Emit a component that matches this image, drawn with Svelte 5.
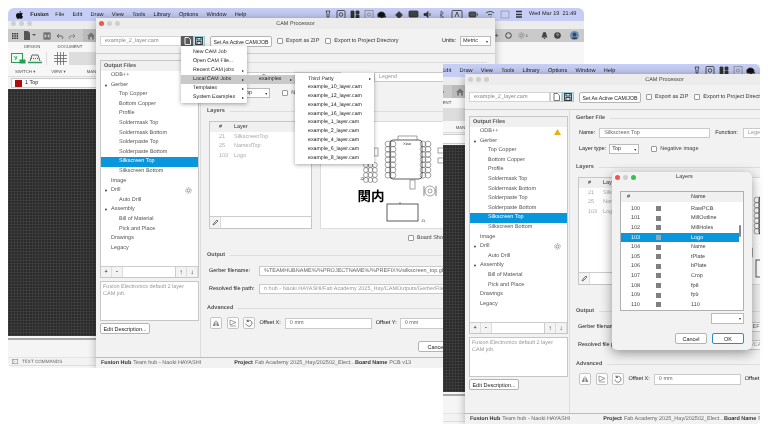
<script>
  const menus = ['File','Edit','Draw','View','Tools','Library','Options','Window','Help'];
  const tree = [
    {t:'ODB++',l:1,warn:true},{t:'Gerber',l:1,arrow:true},{t:'Top Copper',l:2},{t:'Bottom Copper',l:2},{t:'Profile',l:2},
    {t:'Soldermask Top',l:2},{t:'Soldermask Bottom',l:2},{t:'Solderpaste Top',l:2},{t:'Solderpaste Bottom',l:2},
    {t:'Silkscreen Top',l:2,sel:true},{t:'Silkscreen Bottom',l:2},{t:'Image',l:1},{t:'Drill',l:1,arrow:true,gear:true},
    {t:'Auto Drill',l:2},{t:'Assembly',l:1,arrow:true},{t:'Bill of Material',l:2},{t:'Pick and Place',l:2},{t:'Drawings',l:1},{t:'Legacy',l:1}
  ];
  const jobs = ['example_10_layer.cam','example_12_layer.cam','example_14_layer.cam','example_16_layer.cam','example_1_layer.cam','example_2_layer.cam','example_4_layer.cam','example_6_layer.cam','example_8_layer.cam'];
  const first = [['New CAM Job',0],['Open CAM File...',0],['Recent CAM jobs',1],['Local CAM Jobs',1],['Templates',1],['System Examples',1]];
  const layers = [['100','RawPCB'],['101','MillOutline'],['102','MillHoles'],['103','Logo'],['104','Name'],['105','tPlate'],['106','bPlate'],['107','Crop'],['108','fp8'],['109','fp9'],['110','110']];
  const pinRows = [0,1,2,3,4,5,6];
</script>

{#snippet gear(size)}
  <svg width={size} height={size} viewBox="0 0 10 10" fill="none" stroke="#777" stroke-width="1"><circle cx="5" cy="5" r="2"/><circle cx="5" cy="5" r="4" stroke-dasharray="1.4 1.1"/></svg>
{/snippet}

{#snippet pcb()}
  <svg class="pcb" width="167" height="108" viewBox="320 121 167 108" fill="none" stroke="#666" stroke-width="0.6">
    {#each [0,1,2] as r}{#each [0,1,2,3] as c}
      <circle cx={366 + r * 4.4} cy={165 + c * 5} r="2.5"/>
    {/each}{/each}
    <rect x="374" y="148" width="4" height="8" />
    {#each pinRows as r}
      <circle cx="388" cy={144 + r * 5.2} r="2.9"/><circle cx="393" cy={144 + r * 5.2} r="2.9"/>
      <circle cx="423" cy={144 + r * 5.2} r="2.9"/><circle cx="428" cy={144 + r * 5.2} r="2.9"/>
    {/each}
    <rect x="390" y="140" width="32" height="39" rx="3" stroke="#333" stroke-width="0.8"/>
    <path d="M398 140v-4h19v4"/>
    <rect x="410" y="180" width="5" height="9"/>
    <circle cx="430" cy="191" r="5"/><circle cx="430" cy="191" r="2"/>
    <path d="M424 186v10M436 186v10" stroke="#333"/>
    <rect x="387" y="204" width="31" height="17" stroke="#333" stroke-width="0.8"/>
    <path d="M400 204v-2" stroke="#333"/>
    <rect x="438" y="148" width="6" height="5"/><rect x="438" y="158" width="6" height="5"/>
    <text x="407" y="145" class="pt" text-anchor="middle">Xiao</text>
    <text x="421" y="222" class="pt">J1</text>
    <text x="360" y="180" class="pt">J2</text>
    <text x="371" y="201" class="kanji">関内</text>
  </svg>
{/snippet}

{#snippet barIcons()}
  <svg class="baricons" width="260" height="13" viewBox="320 8 260 13" fill="none" stroke="#333" stroke-width="0.8">
    <path d="M326 11h4l-1 3v3h-2v-3z"/>
    <rect x="337" y="10.5" width="8" height="8" rx="1"/><circle cx="341" cy="14.5" r="1.8"/>
    <path d="M351 11h3v7h-3zM356 11h3v3h-3zM356 15h3v3h-3z" fill="#333"/>
    <rect x="365" y="10.5" width="8" height="8" stroke="#888"/><circle cx="369" cy="14.5" r="1.6" stroke="#888"/>
    <path d="M378 16c-1-3 2-4 3-4s4 0 4 3 1 1 1 2h-8zM381 17v2h2v-2" fill="#111"/>
    <circle cx="399" cy="15" r="2.500" fill="#444"/><path d="M399 11v8M395 15h8"/>
    <rect x="409" y="11" width="9" height="6" rx="0.8" fill="#444"/><path d="M412 19h3"/>
    <path d="M424 13.500h2l2-2v6l-2-2h-2z" fill="#333"/><path d="M430 13v3"/>
    <path d="M441 11l2.500 2-3 2 3 2-2.500 2v-8" stroke-width="0.6"/>
    <rect x="452" y="10.500" width="10" height="8" rx="1"/><path d="M455 17l2-5 2 5"/>
    <rect x="469" y="12" width="7" height="5" rx="1" fill="#555"/><path d="M477.500 13.500v2"/>
    <path d="M486 13c3-2 5-2 8 0M488 15c1.500-1 2.500-1 4 0M490 17h0.500" stroke-width="0.9"/>
    <rect x="501" y="11" width="8" height="7" stroke="#999"/>
    <path d="M516 11.500h6M516 14.500h6M516 17h6" stroke-width="1.300"/>
  </svg>
{/snippet}

{#snippet cam(second)}
  <section class="cam">
    <div class="camtitle">
      <i class="dot" class:red={!second}></i><i class="dot"></i><i class="dot"></i>
      <span>CAM Processor</span>
    </div>
    <div class="camtools">
      <div class="jobname">example_2_layer.cam</div>
      <button class="sq" class:dark={!second} aria-label="open">
        <svg width="7" height="8" viewBox="0 0 7 8" fill="none" stroke={second ? '#666' : '#fff'} stroke-width="0.9"><path d="M1 .5h3.500l2 2v5h-5.500z"/></svg>
      </button>
      <button class="sq blue" aria-label="save">
        <svg width="8" height="8" viewBox="0 0 8 8" fill="none" stroke="#333" stroke-width="0.9"><rect x=".5" y=".5" width="7" height="7"/><rect x="2" y=".5" width="4" height="2.500"/><rect x="2" y="4.500" width="4" height="3"/></svg>
      </button>
      <button class="btn setactive">Set As Active CAM/JOB</button>
      <label class="chk zip"><i></i>Export as ZIP</label>
      <label class="chk"><i></i>Export to Project Directory</label>
      <span class="units">Units:</span>
      <div class="select unitsel">Metric<b>▾</b></div>
    </div>
    <div class="cambody">
      <aside class="left">
        <div class="tree">
          <div class="treehead">Output Files</div>
          {#each tree as n}
            <div class="row lv{n.l}" class:sel={n.sel}>
              {#if n.arrow}<em>▼</em>{/if}{n.t}
              {#if n.warn && second}<svg class="warn" width="7" height="6" viewBox="0 0 7 6"><path d="M3.500 0L7 6H0z" fill="#e8b010"/></svg>{/if}
              {#if n.gear}<span class="gear">{@render gear(7)}</span>{/if}
            </div>
          {/each}
          <div class="treetools">
            <span class="tb">+</span><span class="tb">-</span><span class="tbfield"></span><span class="tb bold">↑</span><span class="tb bold">↓</span>
          </div>
        </div>
        <div class="desc">Fusion Electronics default 2 layer CAM job.</div>
        <button class="btn edit">Edit Description...</button>
      </aside>
      <div class="main">
        <div class="head h1">Gerber File</div>
        <div class="form name">
          <span class="lab">Name:</span><div class="field nameinput">Silkscreen Top</div>
          <span class="lab">Function:</span><div class="field fn">Legend</div>
        </div>
        <div class="form type">
          <span class="lab">Layer type:</span><div class="select typesel">Top<b>▾</b></div>
          <label class="chk neg"><i></i>Negative image</label>
        </div>
        <div class="head h2">Layers</div>
        <div class="work">
          <div class="ltable">
            <div class="lhead"><span class="c1">#</span><span>Layer</span></div>
            <div class="lrow"><span class="c1">21</span><span>SilkscreenTop</span></div>
            <div class="lrow"><span class="c1">25</span><span>NamedTop</span></div>
            <div class="lrow"><span class="c1">103</span><span>Logo</span></div>
            <div class="ltools"><span class="tb tall"><svg width="7" height="7" viewBox="0 0 7 7" fill="none" stroke="#666" stroke-width="0.9"><path d="M1 6l1-2 3-3 1 1-3 3z"/></svg></span></div>
          </div>
          <div class="preview">{@render pcb()}</div>
        </div>
        <label class="chk board"><i></i>Board Shown Top</label>
        <div class="head h3">Output</div>
        <div class="form out">
          <span class="lab wide">Gerber filename:</span><div class="field long">%TEAMHUBNAME%/%PROJECTNAME%/%PREFIX%/silkscreen_top.gbr</div>
        </div>
        <div class="form res">
          <span class="lab wide">Resolved file path:</span><div class="field long dim">n hub - Naoki HAYASHI/Fab Academy 2025_Hay/CAMOutputs/GerberFiles/board/silkscreen_top.gbr</div>
        </div>
        <div class="head h4">Advanced</div>
        <div class="form adv">
          <button class="ic" aria-label="mirror"><svg width="8" height="8" viewBox="0 0 8 8" fill="#888"><path d="M3.500 1v6H.5zM4.500 1v6h3z"/></svg></button>
          <button class="ic" aria-label="flip"><svg width="8" height="8" viewBox="0 0 8 8" fill="none" stroke="#888" stroke-width="0.8"><path d="M1 1l6 2.500-6 2.500zM1 7h6"/></svg></button>
          <button class="ic" aria-label="rotate"><svg width="8" height="8" viewBox="0 0 8 8" fill="none" stroke="#555" stroke-width="0.8"><path d="M2 2a3 3 0 1 1-1 2.500M2 .5v2h2"/></svg></button>
          <span class="lab ox">Offset X:</span><div class="field off">0 mm</div>
          <span class="lab oy">Offset Y:</span><div class="field off2">0 mm</div>
        </div>
        <div class="actions"><button class="btn cancel">Cancel</button><button class="btn">Process Job</button></div>
      </div>
    </div>
    <div class="status">
      <b>Fusion Hub</b><span class="s1">Team hub - Naoki HAYASHI</span>
      <b class="p">Project</b><span class="s2">Fab Academy 2025_Hay/202502_Elect...</span>
      <b>Board Name</b><span class="s3">PCB v13</span>
    </div>
  </section>
{/snippet}

{#snippet fusion(second)}
  <div class="menubar">
    <svg class="apple" width="7" height="8" viewBox="0 0 7 8" fill="#111"><path d="M5 0c0 1-.8 1.800-1.600 1.700C3.400 .8 4.200.1 5 0zM3.500 2.200c.5 0 1-.4 1.800-.4.600 0 1.200.3 1.500.8-1.300.8-1.100 2.600.2 3.200C6.500 6.700 5.800 8 5 8c-.6 0-.8-.4-1.500-.4S2.700 8 2.100 8C1 8 0 6 0 4.500 0 3 .9 1.900 2 1.900c.6 0 1.100.3 1.500.3z"/></svg>
    <b>Fusion</b>
    {#each menus as m}<span>{m}</span>{/each}
    {@render barIcons()}
    <span class="clock">Wed Mar 19  21:49</span>
  </div>
  <div class="fustitle"><i class="dot"></i><i class="dot"></i><i class="dot"></i></div>
  <div class="toolbar">
    <svg class="tool t1" width="8" height="8" viewBox="0 0 8 8" fill="#333"><path d="M1 1h1.500v1.500H1zM3.300 1h1.500v1.500H3.300zM5.600 1h1.500v1.500H5.600zM1 3.300h1.500v1.500H1zM3.300 3.300h1.500v1.500H3.300zM5.600 3.300h1.500v1.500H5.600zM1 5.600h1.500v1.500H1zM3.300 5.600h1.500v1.500H3.300zM5.600 5.600h1.500v1.500H5.600z"/></svg>
    <svg class="tool t2" width="12" height="9" viewBox="0 0 12 9" fill="#555"><path d="M0 0h4l2 2v7H0zM8 3h4l-2 2z"/></svg>
    <svg class="tool t3" width="8" height="8" viewBox="0 0 8 8" fill="none" stroke="#555"><rect x="1" y="1" width="6" height="6"/><path d="M3 1v2h2V1M3 7V5h2v2"/></svg>
    <svg class="tool t4" width="8" height="8" viewBox="0 0 8 8" fill="none" stroke="#666"><path d="M1 4h5a2 2 0 0 1 0 3M3 2L1 4l2 2"/></svg>
    <svg class="tool t5" width="8" height="8" viewBox="0 0 8 8" fill="none" stroke="#888"><path d="M7 4H2a2 2 0 0 0 0 3M5 2l2 2-2 2"/></svg>
    <div class="hometab"><svg width="8" height="8" viewBox="0 0 8 8" fill="#777"><path d="M4 .5L8 4H6.800v3.500H5V5H3v2.500H1.200V4H0z"/></svg></div>
    <div class="tright">
      <span class="plus">+</span>
      <svg width="7" height="7" viewBox="0 0 7 7" fill="none" stroke="#444"><circle cx="3.500" cy="3.500" r="2.800"/></svg>
      <span class="gearone">{@render gear(7)}<small>1</small></span>
      <svg class="bell" width="7" height="7" viewBox="0 0 7 7" fill="#444"><path d="M3.500 0C5 0 5.500 1.500 5.500 3L6.500 5.500H.5L1.500 3C1.500 1.500 2 0 3.500 0zM2.800 6h1.400v1H2.800z"/></svg>
      <svg class="help" width="7" height="7" viewBox="0 0 7 7"><circle cx="3.500" cy="3.500" r="3.300" fill="#444"/><path d="M2.500 2.800c0-1.200 2-1.200 2 0 0 .7-1 .7-1 1.500" stroke="#ddd" stroke-width=".7" fill="none"/></svg>
      <svg class="avatar" width="9" height="9" viewBox="0 0 9 9"><circle cx="4.500" cy="4.500" r="4.500" fill="#6d8fb8"/><circle cx="4.500" cy="3.500" r="1.900" fill="#34495f"/><path d="M1.300 8c.6-2.200 5.800-2.200 6.400 0z" fill="#34495f"/></svg>
    </div>
  </div>
  <div class="ribbon">
    <div class="tabs"><span>DESIGN</span><span>DOCUMENT</span></div>
    <div class="rib">
      <svg class="ri1" width="15" height="12" viewBox="0 0 15 12" fill="none" stroke="#2c9b58"><rect x=".5" y=".5" width="11" height="9" fill="#eafaf0"/><path d="M3 3l3 3M6 3l-2 4" stroke-width=".8"/><rect x="9" y="7" width="5" height="3" fill="#2c9b58"/></svg>
      <svg class="ri2" width="14" height="11" viewBox="0 0 14 11" fill="none" stroke="#666"><path d="M2 8l2-6h6l2 6" fill="#eee"/><path d="M3 5.500h8" stroke-dasharray="1 1"/><path d="M0 9.500h14" stroke="#2c9b58" stroke-width="1.500"/></svg>
      <i class="sep"></i>
      <svg class="ri3" width="13" height="13" viewBox="0 0 13 13" fill="none" stroke="#666" stroke-width=".8"><path d="M3.500 0v13M6.500 0v13M9.500 0v13M0 3.500h13M0 6.500h13M0 9.500h13"/></svg>
      <i class="sep s2"></i>
      <svg class="ri4" width="13" height="13" viewBox="0 0 13 13" fill="none" stroke="#666" stroke-width=".8"><rect x=".5" y=".5" width="5" height="10" fill="#ddd"/><rect x="7" y=".5" width="5" height="5" fill="#eee"/><path d="M2 3l3 5 3-5"/><circle cx="10" cy="10" r="2.500" fill="#2a86d8" stroke="none"/></svg>
      <svg class="ri5" width="6" height="13" viewBox="0 0 6 13" fill="#ddd" stroke="#777" stroke-width=".8"><rect x=".5" y=".5" width="5" height="10"/></svg>
    </div>
    <div class="riblabels"><span class="l1">SWITCH ▾</span><span class="l2">VIEW ▾</span><span class="l3">MANAGE</span></div>
  </div>
  <div class="layerbar"><div class="layersel"><i></i>1 Top</div></div>
  <div class="canvas"></div>
  <div class="cmdgap"></div>
  <div class="cmd"><svg width="6" height="5" viewBox="0 0 6 5" fill="none" stroke="#888" stroke-width=".6"><rect x=".3" y=".3" width="5.400" height="4.400"/><path d="M1.500 1.500l1 1-1 1"/></svg>TEXT COMMANDS</div>
  {@render cam(second)}
{/snippet}

<div class="desktop">
  <div class="fusion win1">{@render fusion(false)}</div>

  <nav class="menu m1">
    {#each first as [t, sub]}
      <div class="mi" class:hot={t === 'Local CAM Jobs'}>{t}{#if sub}<b>▸</b>{/if}</div>
    {/each}
  </nav>
  <div class="menu m2"><div class="mi hot">examples<b>▸</b></div></div>
  <nav class="menu m3">
    <div class="mi">Third Party<b>▸</b></div>
    {#each jobs as j}<div class="mi">{j}</div>{/each}
  </nav>

  <div class="clip"><div class="fusion win2">{@render fusion(true)}</div></div>

  <section class="dialog">
    <div class="dlgtitle"><i class="dot red"></i><i class="dot"></i><i class="dot green"></i><span>Layers</span></div>
    <div class="dlist">
      <div class="dhead"><span class="d1">#</span><span class="d3">Name</span></div>
      <div class="drows">
        {#each layers as [n, name]}
          <div class="drow" class:sel={n === '103'}><span class="d1n">{n}</span><i></i><span class="d3n">{name}</span></div>
        {/each}
      </div>
      <i class="thumb"></i>
    </div>
    <div class="combo"><b>▾</b></div>
    <div class="dbtns"><button class="btn dbtn">Cancel</button><button class="btn dbtn ok">OK</button></div>
  </section>
</div>

<style>
  :global(body) { margin: 0; background: #fff; }
  * { box-sizing: border-box; }
  .desktop { position: relative; width: 768px; height: 432px; overflow: hidden; background: #fff; font: 5.5px "Liberation Sans", Arial, sans-serif; color: #333; text-rendering: geometricPrecision; filter: blur(.3px); }
  button { font: inherit; color: inherit; padding: 0; background: #fff; }
  i { font-style: normal; display: block; }

  .fusion { position: absolute; width: 576px; height: 360px; background: #f5f5f5; display: flex; flex-direction: column; overflow: hidden; }
  .win1 { left: 8px; top: 8px; border-radius: 6px; }
  .clip { position: absolute; left: 443px; top: 64px; width: 317px; height: 360px; overflow: hidden; border-radius: 0 5px 5px 0; }
  .win2 { left: -66px; top: 0; }

  .menubar { height: 13px; flex: none; background: #c6cef6; display: flex; align-items: center; gap: 8.3px; padding-left: 8px; font-size: 5.6px; color: #222; position: relative; }
  .menubar b { font-weight: 700; margin-right: -1.7px; }
  .apple { margin-right: -1px; }
  .baricons { position: absolute; left: 312px; top: 0; }
  .clock { position: absolute; left: 521px; top: 3px; white-space: pre; }

  .fustitle { height: 8px; flex: none; background: #ececec; display: flex; gap: 3px; align-items: flex-start; padding: 0 0 0 3px; }
  .dot { width: 5px; height: 5px; border-radius: 50%; background: #cfcfcf; flex: none; }
  .dot.red { background: #f0564e; }
  .dot.green { background: #35c24a; }
  .toolbar { height: 13px; flex: none; background: #cacaca; display: flex; align-items: center; position: relative; padding-left: 3px; }
  .tool { flex: none; }
  .t2 { margin-left: 5px; } .t3 { margin-left: 7px; } .t4 { margin-left: 5px; } .t5 { margin-left: 4px; }
  .hometab { width: 16px; height: 13px; background: #bbb; margin-left: 7px; display: flex; align-items: center; justify-content: center; }
  .tright { position: absolute; right: 5px; top: 0; height: 13px; display: flex; align-items: center; gap: 6px; }
  .plus { font-size: 8px; color: #555; }
  .gearone { display: flex; align-items: center; gap: 1px; }
  .gearone small { font-size: 4px; }
  .bell { margin-left: 7px; }
  .avatar { margin-left: 3px; }

  .ribbon { height: 35px; flex: none; background: #f7f7f7; border-bottom: 1px solid #ddd; }
  .tabs { display: flex; gap: 17px; padding: 2px 0 0 16px; height: 9px; font-size: 4.300px; color: #555; }
  .rib { display: flex; align-items: center; height: 15px; padding-left: 3px; }
  .ri2 { margin-left: 2px; }
  .sep { width: 1px; height: 13px; background: #ddd; margin-left: 4px; }
  .ri3 { margin-left: 7px; }
  .s2 { margin-left: 5px; }
  .ri4 { margin-left: 5px; }
  .ri5 { margin-left: 1px; }
  .riblabels { display: flex; font-size: 4.300px; color: #555; padding-top: 3px; }
  .l1 { margin-left: 7px; } .l2 { margin-left: 16px; } .l3 { margin-left: 21px; }
  .layerbar { height: 12px; flex: none; padding: 1px 3px; background: #f3f3f3; }
  .layersel { height: 10px; width: 100%; background: #fff; border: 1px solid #ccc; display: flex; align-items: center; gap: 3px; padding-left: 3px; color: #222; }
  .layersel i { width: 7px; height: 7px; background: #b00c0c; }
  .canvas { flex: 1; background-color: #2a2a2a; background-image: repeating-linear-gradient(0deg, #3c3c3c 0 1px, transparent 1px 3px), repeating-linear-gradient(90deg, #3c3c3c 0 1px, transparent 1px 3px); }
  .cmdgap { height: 19px; flex: none; background: #f5f5f5; border-top: 2px solid #a8a8a8; margin-top: 2px; }
  .cmd { height: 9px; flex: none; margin-bottom: 2px; background: #f3f3f3; border-top: 1px solid #e4e4e4; border-bottom: 1px solid #ddd; display: flex; align-items: center; gap: 4px; padding-left: 4px; font-size: 4.600px; color: #666; }

  .cam { position: absolute; left: 88px; top: 10px; width: 399px; height: 350px; background: #f2f2f2; border-radius: 5px 5px 0 0; box-shadow: 0 0 9px rgba(0,0,0,.3); display: flex; flex-direction: column; }
  .camtitle { height: 11px; flex: none; background: #ececec; display: flex; gap: 3px; align-items: center; padding-left: 3px; position: relative; }
  .camtitle span { position: absolute; left: 0; right: 0; text-align: center; color: #444; }
  .camtools { height: 25px; flex: none; border-bottom: 1px solid #cfcfcf; display: flex; align-items: flex-start; padding: 7px 4px 0; }
  .jobname { width: 81px; height: 10px; background: #fff; border: 1px solid #d4d4d4; padding-left: 4px; line-height: 8px; color: #888; }
  .sq { width: 12px; height: 10px; border: 1px solid #ccc; display: flex; align-items: center; justify-content: center; }
  .sq.dark { background: #5b5b5b; border-color: #5b5b5b; }
  .sq.blue { background: #cfe6f2; border-color: #9cc; }
  .btn { background: #fff; border: 1px solid #b4b4b4; border-radius: 2px; height: 10px; white-space: nowrap; color: #222; }
  .setactive { width: 62px; margin: 0 0 0 5px; height: 11px; font-size: 5.200px; }
  .chk { display: flex; align-items: center; gap: 3px; color: #333; white-space: nowrap; }
  .chk i { width: 6px; height: 6px; background: #fff; border: 1px solid #999; border-radius: 1px; flex: none; }
  .zip { margin-left: 5px; margin-right: 6px; }
  .camtools .chk { height: 9px; }
  .units { margin-left: auto; margin-right: 4px; height: 9px; line-height: 11px; color: #222; }
  .select { height: 10px; background: #fff; border: 1px solid #bbb; display: flex; justify-content: space-between; align-items: center; padding: 0 2px; color: #333; }
  .select b, .combo b { font-size: 4px; font-weight: 400; }
  .unitsel { width: 31px; }

  .cambody { flex: 1; display: flex; min-height: 0; }
  .left { width: 105px; flex: none; padding: 6px 1px 0 4px; border-right: 1px solid #ddd; display: flex; flex-direction: column; }
  .tree { height: 218px; background: #fff; border: 1px solid #c6c6c6; display: flex; flex-direction: column; }
  .treehead { height: 10px; flex: none; background: #f0f0f0; padding-left: 3px; line-height: 10px; font-weight: 700; color: #555; }
  .row { height: 9.6px; flex: none; line-height: 9.6px; position: relative; white-space: nowrap; color: #555; }
  .lv1 { padding-left: 10px; }
  .lv2 { padding-left: 18px; }
  .row em { position: absolute; left: 3px; font-size: 4px; font-style: normal; color: #333; }
  .row.sel { background: #0a96dc; color: #fff; }
  .warn { position: absolute; right: 6px; top: 2px; }
  .gear { position: absolute; right: 6px; top: 1px; line-height: 0; }
  .treetools { margin-top: auto; height: 11px; background: #eee; display: flex; border-top: 1px solid #ccc; flex: none; }
  .tb { width: 11px; display: flex; align-items: center; justify-content: center; border-right: 1px solid #ddd; background: #f3f3f3; font-weight: 700; flex: none; }
  .tb.bold { font-size: 6.5px; }
  .tbfield { flex: 1; background: #fff; border-right: 1px solid #ccc; }
  .desc { height: 40px; margin-top: 3px; background: #fff; border: 1px solid #c6c6c6; padding: 2px; color: #999; line-height: 6.5px; }
  .edit { width: 50px; margin-top: 2px; height: 11px; }

  .main { flex: 1; min-width: 0; padding: 0 8px 0 6px; }
  .head { display: flex; align-items: center; gap: 5px; height: 8px; font-weight: 700; color: #555; white-space: nowrap; }
  .head::after { content: ""; flex: 1; height: 1px; background: #ddd; }
  .h1 { margin-top: 4px; }
  .form { display: flex; align-items: center; white-space: nowrap; padding-left: 3px; }
  .lab { color: #222; }
  .field { height: 10px; background: #fff; border: 1px solid #cacaca; line-height: 8px; padding-left: 4px; color: #666; overflow: hidden; white-space: nowrap; }
  .name { margin-top: 6px; }
  .nameinput { width: 111px; margin-left: 4px; }
  .fn { flex: 1; margin-left: 5px; color: #999; }
  .name .lab + .field + .lab { margin-left: 5px; }
  .type { margin-top: 6px; }
  .typesel { width: 30px; margin-left: 3px; }
  .neg { margin-left: 12px; color: #444; }
  .h2 { margin-top: 9px; }
  .work { margin-top: 6px; display: flex; gap: 8px; height: 108px; padding-left: 2px; }
  .ltable { width: 103px; flex: none; background: #fff; border: 1px solid #c6c6c6; display: flex; flex-direction: column; }
  .lhead { height: 10px; flex: none; background: #f0f0f0; display: flex; align-items: center; color: #333; }
  .lrow { height: 9.6px; flex: none; display: flex; align-items: center; color: #aaa; }
  .c1 { width: 24px; padding-left: 9px; flex: none; }
  .ltools { margin-top: auto; height: 12px; border-top: 1px solid #ccc; display: flex; background: #fff; }
  .tall { width: 11px; background: #f3f3f3; }
  .preview { flex: 1; background: #fff; border: 1px solid #ddd; overflow: hidden; position: relative; line-height: 0; }
  .pcb { display: block; margin: -1px; }
  .pt { font: 3.800px "Liberation Sans", Arial, sans-serif; fill: #222; stroke: none; }
  .kanji { font: 700 13.500px "Noto Sans CJK JP", sans-serif; fill: #000; stroke: none; text-anchor: middle; }
  .board { margin: 6px 0 0 201px; height: 6px; color: #444; }
  .h3 { margin-top: 10px; }
  .out { margin-top: 7px; padding-left: 2px; }
  .res { margin-top: 8px; padding-left: 2px; }
  .wide { width: 50px; flex: none; }
  .long { flex: 1; min-width: 0; }
  .dim { color: #999; }
  .h4 { margin-top: 10px; }
  .adv { margin-top: 5px; padding-left: 3px; height: 12px; }
  .ic { width: 12px; height: 12px; border: 1px solid #c4c4c4; border-radius: 2px; margin-right: 4.500px; display: flex; align-items: center; justify-content: center; flex: none; }
  .ox { margin-right: 4px; }
  .off { width: 87px; height: 11px; line-height: 9px; }
  .oy { margin-left: 4px; margin-right: 3px; }
  .off2 { flex: 1; height: 11px; line-height: 9px; }
  .actions { display: flex; justify-content: flex-end; gap: 3px; margin-top: 12px; }
  .actions .btn { width: 30px; height: 11px; }
  .actions .cancel { width: 36px; }

  .status { height: 11px; flex: none; border-top: 1px solid #bbb; background: #f2f2f2; display: flex; align-items: center; padding-left: 5px; white-space: nowrap; color: #666; }
  .status b { color: #333; }
  .s1 { margin-left: 2px; width: 101px; flex: none; }
  .s2 { margin-left: 2px; width: 100px; flex: none; overflow: hidden; }
  .s3 { margin-left: 2px; }

  .menu { position: absolute; background: #fff; box-shadow: 0 1px 4px rgba(0,0,0,.35); color: #222; font-size: 5.250px; }
  .m1 { left: 181px; top: 46px; width: 66px; height: 57px; padding-top: 1.500px; }
  .m2 { left: 247px; top: 74.500px; width: 48px; height: 9px; box-shadow: none; }
  .m3 { left: 295px; top: 73px; width: 79px; height: 91px; padding-top: 1.500px; }
  .mi { height: 9px; line-height: 9px; padding: 0 3px 0 12px; display: flex; justify-content: space-between; align-items: center; white-space: nowrap; }
  .m3 .mi { padding-left: 13px; height: 8.800px; line-height: 8.800px; }
  .mi b { font-size: 4px; font-weight: 400; }
  .mi.hot { background: #c9c9c9; }

  .dialog { position: absolute; left: 612px; top: 172px; width: 140px; height: 178px; background: #f2f2f2; border-radius: 5px; box-shadow: 0 3px 12px rgba(0,0,0,.4); padding: 0 8px; }
  .dlgtitle { height: 19px; display: flex; gap: 3px; align-items: flex-start; padding-top: 3px; margin-left: -5px; position: relative; }
  .dlgtitle span { position: absolute; left: 0; right: -10px; text-align: center; top: 2px; color: #333; font-size: 5.600px; }
  .dlist { height: 120px; border: 1px solid #b0b0b0; background: #fff; position: relative; }
  .dhead { height: 10px; background: #f0f0f0; display: flex; align-items: center; color: #333; }
  .d1 { width: 70px; padding-left: 6px; }
  .drows { padding-top: 2px; width: 118px; }
  .drow { height: 9.600px; display: flex; align-items: center; color: #444; }
  .d1n { width: 35px; padding-left: 10px; flex: none; }
  .drow i { width: 5px; height: 5px; background: #808080; flex: none; }
  .d3n { margin-left: 30px; }
  .drow.sel { background: #0a96dc; color: #fff; }
  .drow.sel i { background: #8fa9b8; }
  .thumb { position: absolute; right: 2px; top: 33px; width: 2.500px; height: 12px; background: #888; border-radius: 1px; }
  .combo { width: 33px; height: 11px; margin: 2px 0 0 91px; background: #fff; border: 1px solid #bbb; display: flex; align-items: center; justify-content: flex-end; padding-right: 2px; }
  .dbtns { display: flex; justify-content: flex-end; gap: 5px; margin-top: 9px; }
  .dbtn { width: 32px; height: 11px; }
  .ok { border: 1px solid #2a8cd0; }
</style>
